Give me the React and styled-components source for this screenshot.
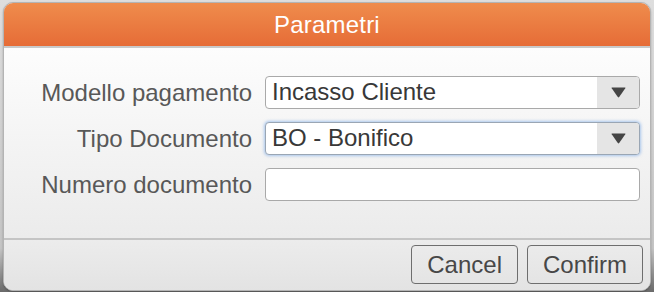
import React from "react"
import styled, { createGlobalStyle, css } from "styled-components"

const GlobalStyle = createGlobalStyle`
    html, body {
        margin: 0;
        padding: 0;
        background: #cfcfcf;
        font-family: "Liberation Sans", Arial, sans-serif;
    }
`

const Page = styled.div`
    width: 654px;
    height: 292px;
    padding: 2px 3px 3px 3px;
    box-sizing: border-box;
    background: linear-gradient(#dedede, #c4c4c4 85%, #6a6a6a);
`

const Dialog = styled.section`
    height: 287px;
    border: 1px solid #b4b4b4;
    border-radius: 10px;
    overflow: hidden;
    display: flex;
    flex-direction: column;
    background: #ececec;
    box-shadow: 0 1px 2px rgba(0, 0, 0, 0.25);
`

const Header = styled.header`
    height: 45px;
    flex: none;
    display: flex;
    align-items: center;
    justify-content: center;
    padding-top: 1px;
    box-sizing: border-box;
    background: linear-gradient(#ef8c4c, #e66c37);
    border-bottom: 2px solid #c9c9c9;
    color: #fff;
    font-size: 24px;
    letter-spacing: 0.2px;
`

const Body = styled.div`
    flex: 1;
    padding: 28px 10px 0 0;
    background: linear-gradient(#fdfdfd, #ebebeb);
    border-bottom: 2px solid #c4c4c4;
`

const Form = styled.div`
    display: grid;
    grid-template-columns: 1fr 375px;
    column-gap: 13px;
    row-gap: 13px;
    align-items: center;
`

const Label = styled.label`
    text-align: right;
    color: #585858;
    font-size: 24px;
    line-height: 33px;
`

const fieldBox = css`
    height: 33px;
    box-sizing: border-box;
    border: 1.5px solid #a9a9a9;
    border-radius: 4px;
    background: #fff;
    font-size: 24px;
    color: #383838;
`

const Select = styled.div`
    ${fieldBox};
    display: flex;
    align-items: stretch;
    overflow: hidden;
    ${(p) => p.$focused && css`
        border-color: #9aa6b4;
        box-shadow: 0 0 3px 1px rgba(110, 160, 230, 0.55);
    `}
`

const SelectValue = styled.span`
    flex: 1;
    padding-left: 6px;
    line-height: 30px;
`

const Arrow = styled.span`
    width: 42px;
    display: flex;
    align-items: center;
    justify-content: center;
    background: #e5e5e5;
`

const Input = styled.div`
    ${fieldBox};
`

const Footer = styled.footer`
    height: 50px;
    flex: none;
    display: flex;
    justify-content: flex-end;
    align-items: flex-start;
    gap: 9px;
    padding: 5px 7px 0 0;
    box-sizing: border-box;
    background: linear-gradient(#ececec, #e3e3e3);
`

const Button = styled.button`
    height: 39px;
    padding: 0 15px;
    border: 1.5px solid #6e6e6e;
    border-radius: 4px;
    background: transparent;
    font-family: inherit;
    font-size: 24px;
    color: #474747;
`

const Triangle = () => (
    <svg width="15" height="11" viewBox="0 0 15 11">
        <path d="M1 0.5 H14 Q14.8 0.5 14.3 1.3 L8.2 10 Q7.5 10.8 6.8 10 L0.7 1.3 Q0.2 0.5 1 0.5 Z" fill="#454545" />
    </svg>
)

const SelectField = ({ value, focused }) => (
    <Select $focused={focused}>
        <SelectValue>{value}</SelectValue>
        <Arrow><Triangle /></Arrow>
    </Select>
)

const App = () => (
    <Page>
        <GlobalStyle />
        <Dialog>
            <Header>Parametri</Header>
            <Body>
                <Form>
                    <Label>Modello pagamento</Label>
                    <SelectField value="Incasso Cliente" />
                    <Label>Tipo Documento</Label>
                    <SelectField value="BO - Bonifico" focused />
                    <Label>Numero documento</Label>
                    <Input />
                </Form>
            </Body>
            <Footer>
                <Button>Cancel</Button>
                <Button>Confirm</Button>
            </Footer>
        </Dialog>
    </Page>
)

export default App
